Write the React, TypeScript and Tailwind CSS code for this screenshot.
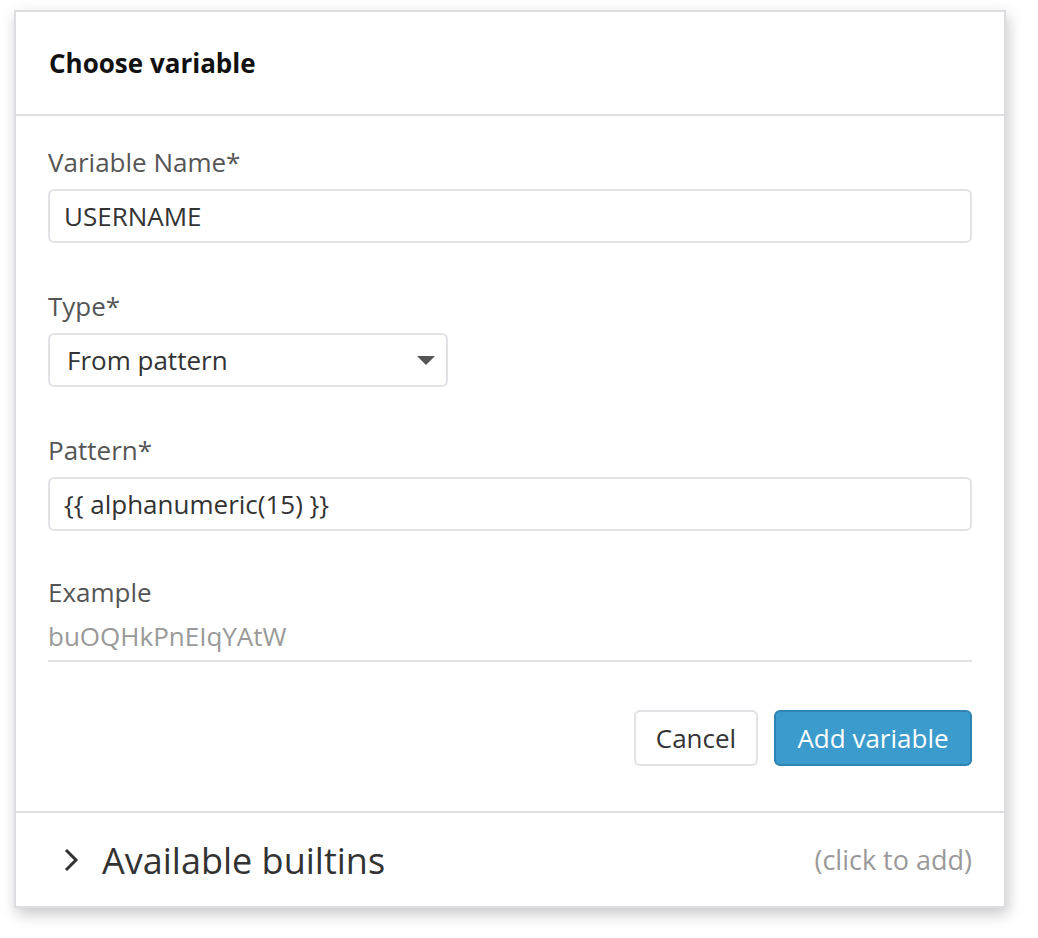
import React from "react";

const font = { fontFamily: '"Open Sans", "Noto Sans", sans-serif' };

export default function App() {
  return (
    <div className="w-[1038px] h-[938px] bg-white pt-[10px] pl-[14px]" style={font}>
      <div className="w-[992px] h-[898px] bg-white border-2 border-[#dddce1] shadow-[2px_6px_14px_rgba(0,0,0,0.22)] flex flex-col">
        <div className="h-[104px] shrink-0 border-b-2 border-[#e0dfe4] flex items-center pl-[33px]">
          <h1 className="text-[26px] font-bold text-[#111] leading-[34px]">Choose variable</h1>
        </div>
        <div className="flex flex-col px-[32px] pt-[29px]">
          <label className="text-[26px] leading-[34px] text-[#555]">Variable Name*</label>
          <div className="mt-[10px] h-[54px] border-2 border-[#e2e1e5] rounded-[6px] flex items-center px-[14px] text-[26px] text-[#333]">
            USERNAME
          </div>
          <label className="mt-[46px] text-[26px] leading-[34px] text-[#555]">Type*</label>
          <div className="mt-[10px] w-[400px] h-[54px] border-2 border-[#e2e1e5] rounded-[6px] flex items-center justify-between pl-[17px] pr-[11px] text-[26px] text-[#333]">
            <span>From pattern</span>
            <svg width="18" height="9" viewBox="0 0 18 9"><path d="M0 0 H18 L9 9 Z" fill="#555" /></svg>
          </div>
          <label className="mt-[46px] text-[26px] leading-[34px] text-[#555]">Pattern*</label>
          <div className="mt-[10px] h-[54px] border-2 border-[#e2e1e5] rounded-[6px] flex items-center px-[14px] text-[26px] text-[#333]">
            {"{{ alphanumeric(15) }}"}
          </div>
          <label className="mt-[44px] text-[26px] leading-[34px] text-[#555]">Example</label>
          <div className="mt-[9px] pb-[6px] border-b-2 border-[#e2e1e5] text-[26px] leading-[36px] text-[#999]">
            buOQHkPnEIqYAtW
          </div>
          <div className="mt-[48px] flex justify-end gap-[16px]">
            <button className="h-[56px] w-[124px] border-2 border-[#e2e1e5] rounded-[6px] bg-white text-[26px] text-[#333]">
              Cancel
            </button>
            <button className="h-[56px] w-[198px] border-2 border-[#2f83b3] rounded-[6px] bg-[#3a9bcc] text-[26px] text-white">
              Add variable
            </button>
          </div>
        </div>
        <div className="mt-[45px] border-t-2 border-[#e0dfe4] flex-1 flex items-center justify-between pl-[47px] pr-[32px]">
          <div className="flex items-center gap-[23px]">
            <svg width="16" height="26" viewBox="0 0 16 26"><path d="M3 3 L13 13 L3 23" fill="none" stroke="#333" strokeWidth="3" /></svg>
            <span className="text-[36px] text-[#333] pt-[2px]">Available builtins</span>
          </div>
          <span className="text-[27px] text-[#999] pt-[2px]">(click to add)</span>
        </div>
      </div>
    </div>
  );
}
